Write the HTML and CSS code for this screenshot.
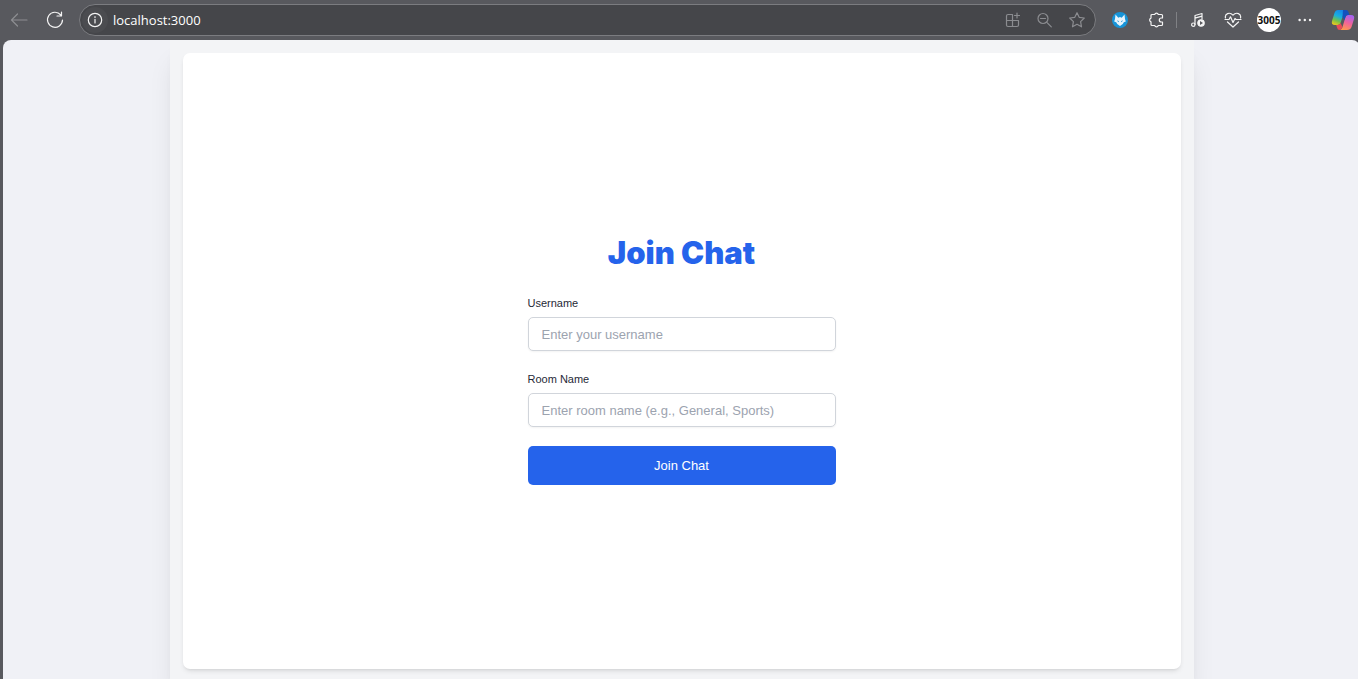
FILE: index.html
```html
<!DOCTYPE html>
<html lang="en">
<head>
<meta charset="utf-8">
<title>Join Chat</title>
<link rel="stylesheet" href="styles.css">
</head>
<body>
<header class="toolbar">
  <button class="tool back" aria-label="Back"><svg width="18" height="18" viewBox="0 0 18 18"><path d="M17 9H1.500M7.500 3L1.500 9L7.500 15"/></svg></button>
  <button class="tool reload" aria-label="Reload"><svg width="18" height="18" viewBox="0 0 18 18"><path d="M14.800 4A7.500 7.500 0 1 0 16.500 9M15.500 1V5H11"/></svg></button>
  <div class="address">
    <button class="tool info" aria-label="Site information"><svg width="16" height="16" viewBox="0 0 16 16"><circle cx="8" cy="8" r="6.700"/><path d="M8 7.300V11M8 4.700V5.500"/></svg></button>
    <input class="url" type="text" aria-label="Address" value="localhost:3000">
    <div class="address-tools">
      <button class="tool dim" aria-label="Add app"><svg width="16" height="16" viewBox="0 0 16 16"><path d="M8.500 2.500H4A1.500 1.500 0 0 0 2.500 4V13A1.500 1.500 0 0 0 4 14.500H13A1.500 1.500 0 0 0 14.500 13V8.500H2.500M8.500 2.500V14.500M13 1V6M10.500 3.500H15.500"/></svg></button>
      <button class="tool dim" aria-label="Zoom out"><svg width="16" height="16" viewBox="0 0 16 16"><circle cx="7" cy="6.500" r="5"/><path d="M4.500 6.500H9.500M10.800 10.300L15.300 14.800"/></svg></button>
      <button class="tool dim" aria-label="Favorite"><svg width="18" height="18" viewBox="0 0 18 18"><path d="M9 1.700L11.200 6.300L16.300 7L12.600 10.600L13.500 15.800L9 13.300L4.500 15.800L5.400 10.600L1.700 7L6.800 6.300Z"/></svg></button>
    </div>
  </div>
  <div class="extensions">
    <button class="tool" aria-label="Fox extension"><svg width="16" height="16" viewBox="0 0 16 16"><circle class="fox-bg" cx="8" cy="8" r="8"/><path class="fox" d="M3.500 2.500L6.300 5.800L8 5L9.700 5.800L12.500 2.500L13 7L13.800 9.500L11.800 10.200L10.800 12L8 14L5.200 12L4.200 10.200L2.200 9.500L3 7Z"/><path class="fox-line" d="M5 8.300L7 9.300L6.300 10.300ZM11 8.300L9 9.300L9.700 10.300Z"/></svg></button>
    <button class="tool" aria-label="Extensions"><svg width="16" height="16" viewBox="0 0 16 16"><path d="M4 2.500H6.700A1.900 1.900 0 0 1 10.300 2.500H13.500A1 1 0 0 1 14.500 3.500V6H13.300A2 2 0 0 0 13.300 10H14.500V12.500A1 1 0 0 1 13.500 13.500H10.300A1.900 1.900 0 0 1 6.700 13.500H4A1 1 0 0 1 3 12.500V9.900A2 2 0 0 1 3 6.100V3.500A1 1 0 0 1 4 2.500Z"/></svg></button>
    <span class="divider"></span>
    <button class="tool" aria-label="Media controls"><svg width="16" height="16" viewBox="0 0 16 16"><path d="M5 12.500V3.500L12 1.500V7M5 6.200L12 4.200"/><circle cx="3.300" cy="12.700" r="1.700"/><circle class="solid" cx="11" cy="11" r="3.200"/><path class="play" d="M10 9L13 11L10 13Z"/></svg></button>
    <button class="tool" aria-label="Performance"><svg width="18" height="16" viewBox="0 0 18 16"><path d="M1.500 6C.500 2 5.500-.700 9 3.200C12.500-.700 17.500 2 16.500 6M1 7.500H5L6.500 4.800L9 10.500L11 6.500L12 7.500H17M3.500 10L9 15L14.500 10"/></svg></button>
    <button class="profile" aria-label="Profile 3005">3005</button>
    <button class="tool" aria-label="More"><svg width="16" height="16" viewBox="0 0 16 16"><g class="solid"><circle cx="2.600" cy="8" r=".600"/><circle cx="7.800" cy="8" r=".600"/><circle cx="13" cy="8" r=".600"/></g></svg></button>
    <button class="tool copilot" aria-label="Copilot"><svg width="24" height="22" viewBox="0 0 24 22">
      <defs>
        <linearGradient id="cool" x1=".6" y1="0" x2=".2" y2="1"><stop offset="0" stop-color="#1687e8"/><stop offset=".4" stop-color="#18aee0"/><stop offset=".7" stop-color="#74c24b"/><stop offset="1" stop-color="#f1c91d"/></linearGradient>
        <linearGradient id="warm" x1=".7" y1="0" x2=".3" y2="1"><stop offset="0" stop-color="#a463f2"/><stop offset=".5" stop-color="#f2639a"/><stop offset="1" stop-color="#ff9a4c"/></linearGradient>
      </defs>
      <path fill="url(#warm)" d="M17 6H20Q24 6 23 10L20.500 18Q19.500 21 16 21H8Q10.500 21 11.500 18L14.500 8Q15 6 17 6Z"/>
      <path fill="url(#cool)" d="M7 1H15L12.500 5L9.500 14Q9 16 6.500 16H4Q0 16 1 12L3.500 4Q4.500 1 7 1Z"/>
      <path fill="#1551bd" d="M12 1H15Q17 1 17.500 3L18.300 6H17Q15 6 14.500 8L13.500 11L11.500 8Z"/>
      <path fill="#e94b57" d="M9.500 14L11.500 18Q10.500 21 8.500 21Q6.500 21 6 18.500L5.200 16H6.500Q9 16 9.500 14Z"/>
    </svg></button>
  </div>
</header>
<main class="page">
  <div class="panel">
    <section class="card">
      <form class="join-form">
        <h1>Join Chat</h1>
        <div class="field">
          <label for="username">Username</label>
          <input id="username" type="text" placeholder="Enter your username">
        </div>
        <div class="field">
          <label for="room">Room Name</label>
          <input id="room" type="text" placeholder="Enter room name (e.g., General, Sports)">
        </div>
        <button class="submit" type="button">Join Chat</button>
      </form>
    </section>
  </div>
</main>
</body>
</html>
```
FILE: styles.css
```css
* { box-sizing: border-box; }

body {
  display: flex;
  flex-direction: column;
  height: 100vh;
  margin: 0;
  overflow: hidden;
  background: #58595e;
  font-family: "Liberation Sans", Arial, sans-serif;
}

button { padding: 0; border: 0; background: none; font: inherit; }

.toolbar {
  display: flex;
  flex: none;
  align-items: center;
  height: 40px;
  padding-left: 10px;
}

.tool { display: flex; color: #f4f4f4; }
.tool svg {
  display: block;
  fill: none;
  stroke: currentColor;
  stroke-width: 1.2;
  stroke-linecap: round;
  stroke-linejoin: round;
}
.back { color: #8d8e92; }
.reload { margin-left: 18px; }
.dim { color: #8b8c90; }

.address {
  display: flex;
  flex: 1;
  align-items: center;
  height: 32px;
  margin-left: 15px;
  padding: 0 9px 0 2px;
  border: 1px solid #7b7c80;
  border-radius: 16px;
  background: #45464a;
}
.info {
  flex: none;
  align-items: center;
  justify-content: center;
  width: 26px;
  height: 26px;
  border-radius: 50%;
  background: #4b4c50;
}
.url {
  flex: 1;
  min-width: 0;
  margin-left: 5px;
  padding: 0;
  border: 0;
  background: none;
  color: #ffffff;
  font-family: "Open Sans", "Noto Sans", sans-serif;
  font-size: 13px;
}
.address-tools { display: flex; align-items: center; gap: 16px; }

.extensions {
  display: flex;
  flex: none;
  align-items: center;
  margin-left: 16px;
}
.extensions > * { margin-right: 20px; }
.extensions > .divider {
  width: 1px;
  height: 16px;
  margin: 0 13px 0 -8px;
  background: #808185;
}
.extensions > .divider + .tool { margin-right: 18px; }
.tool .fox-bg { fill: #1794d8; stroke: none; }
.tool .fox { fill: #e8f4fc; stroke: none; }
.tool .fox-line { fill: #1794d8; stroke: none; }
.tool .solid { fill: #f4f4f4; }
.tool .play { fill: #58595e; stroke: none; }

.extensions > .profile {
  display: flex;
  align-items: center;
  justify-content: center;
  width: 24px;
  height: 24px;
  margin: 0 16px 0 -5px;
  border-radius: 50%;
  background: #ffffff;
  color: #111111;
  font-family: "Open Sans", sans-serif;
  font-size: 10px;
  font-weight: 700;
}
.extensions > .copilot { margin: 0 3px 0 -2px; }
.tool.copilot svg { stroke: none; }

.page {
  display: flex;
  flex: 1;
  justify-content: center;
  min-height: 0;
  margin: 0 -2px 0 3px;
  overflow: hidden;
  border-radius: 8px 8px 0 0;
  background: #f0f1f6;
}
.panel {
  display: flex;
  width: 100%;
  max-width: 1024px;
  padding: 13px 13px 10px;
  background: #f3f4f6;
  box-shadow: 0 20px 25px -5px rgba(0, 0, 0, 0.1), 0 8px 10px -6px rgba(0, 0, 0, 0.1);
}
.card {
  display: flex;
  flex: 1;
  align-items: center;
  justify-content: center;
  padding-bottom: 7px;
  border-radius: 7px;
  background: #ffffff;
  box-shadow: 0 3px 5px -1px rgba(0, 0, 0, 0.1), 0 2px 3px -2px rgba(0, 0, 0, 0.1);
}
.join-form {
  display: flex;
  flex-direction: column;
  gap: 19px;
  width: 308px;
}
h1 {
  margin: 0;
  color: #2563eb;
  font-family: "Arial Black", Inter, sans-serif;
  font-size: 31px;
  font-weight: 900;
  line-height: 45px;
  text-align: center;
}
.field { display: flex; flex-direction: column; gap: 5px; }
.field label {
  color: #1f2937;
  font-size: 11px;
  line-height: 18px;
}
.field input {
  width: 100%;
  height: 34px;
  padding: 0 13px;
  border: 1px solid #d1d5db;
  border-radius: 5px;
  background: #ffffff;
  box-shadow: 0 1px 2px rgba(0, 0, 0, 0.05);
  color: #111827;
  font: 13px "Liberation Sans", Arial, sans-serif;
}
.field input::placeholder { color: #9ca3af; }
.submit {
  height: 39px;
  border-radius: 5px;
  background: #2563eb;
  color: #ffffff;
  font-size: 13px;
}
```
